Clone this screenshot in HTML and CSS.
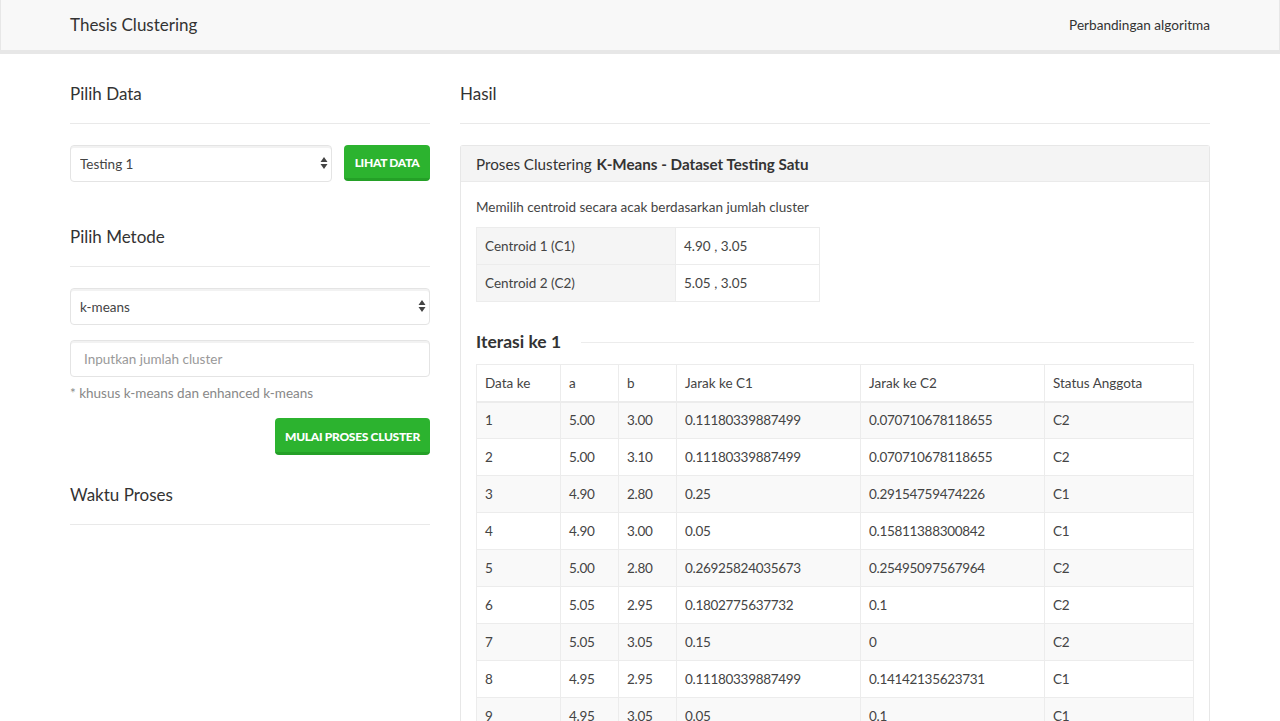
FILE: index.html
```html
<!DOCTYPE html>
<html lang="id">
<head>
<meta charset="utf-8">
<title>Thesis Clustering</title>
<link rel="stylesheet" href="styles.css">
</head>
<body>
<nav class="navbar">
  <div class="container nav-inner">
    <a class="brand" href="#">Thesis Clustering</a>
    <a class="nav-link" href="#">Perbandingan algoritma</a>
  </div>
</nav>
<main class="container layout">
  <section class="side">
    <h4 class="section-title">Pilih Data</h4>
    <hr class="rule">
    <div class="data-row">
      <div class="select-wrap grow">
        <select class="field"><option>Testing 1</option></select>
        <svg class="arrows" width="8" height="14" viewBox="0 0 8 14"><path d="M4 1 L7.5 6 H0.5 Z M4 13 L7.5 8 H0.5 Z" fill="#444"/></svg>
      </div>
      <button class="btn btn-small">Lihat Data</button>
    </div>
    <h4 class="section-title second">Pilih Metode</h4>
    <hr class="rule">
    <div class="select-wrap">
      <select class="field"><option>k-means</option></select>
      <svg class="arrows" width="8" height="14" viewBox="0 0 8 14"><path d="M4 1 L7.5 6 H0.5 Z M4 13 L7.5 8 H0.5 Z" fill="#444"/></svg>
    </div>
    <input class="field input" type="text" placeholder="Inputkan jumlah cluster">
    <p class="help">* khusus k-means dan enhanced k-means</p>
    <div class="actions"><button class="btn btn-wide">Mulai Proses Cluster</button></div>
    <h4 class="section-title third">Waktu Proses</h4>
    <hr class="rule">
  </section>
  <section class="content">
    <h4 class="section-title">Hasil</h4>
    <hr class="rule">
    <div class="panel">
      <div class="panel-heading">Proses Clustering <b>K-Means - Dataset Testing Satu</b></div>
      <div class="panel-body">
        <p class="lead-text">Memilih centroid secara acak berdasarkan jumlah cluster</p>
        <table class="centroids">
          <tr><th>Centroid 1 (C1)</th><td>4.90 , 3.05</td></tr>
          <tr><th>Centroid 2 (C2)</th><td>5.05 , 3.05</td></tr>
        </table>
        <h4 class="iter">Iterasi ke 1</h4>
        <table class="data">
          <colgroup><col class="c1"><col class="c2"><col class="c3"><col class="c4"><col class="c5"><col class="c6"></colgroup>
          <thead><tr><th>Data ke</th><th>a</th><th>b</th><th>Jarak ke C1</th><th>Jarak ke C2</th><th>Status Anggota</th></tr></thead>
          <tbody>
            <tr><td>1</td><td>5.00</td><td>3.00</td><td>0.11180339887499</td><td>0.070710678118655</td><td>C2</td></tr>
            <tr><td>2</td><td>5.00</td><td>3.10</td><td>0.11180339887499</td><td>0.070710678118655</td><td>C2</td></tr>
            <tr><td>3</td><td>4.90</td><td>2.80</td><td>0.25</td><td>0.29154759474226</td><td>C1</td></tr>
            <tr><td>4</td><td>4.90</td><td>3.00</td><td>0.05</td><td>0.15811388300842</td><td>C1</td></tr>
            <tr><td>5</td><td>5.00</td><td>2.80</td><td>0.26925824035673</td><td>0.25495097567964</td><td>C2</td></tr>
            <tr><td>6</td><td>5.05</td><td>2.95</td><td>0.1802775637732</td><td>0.1</td><td>C2</td></tr>
            <tr><td>7</td><td>5.05</td><td>3.05</td><td>0.15</td><td>0</td><td>C2</td></tr>
            <tr><td>8</td><td>4.95</td><td>2.95</td><td>0.11180339887499</td><td>0.14142135623731</td><td>C1</td></tr>
            <tr><td>9</td><td>4.95</td><td>3.05</td><td>0.05</td><td>0.1</td><td>C1</td></tr>
          </tbody>
        </table>
      </div>
    </div>
  </section>
</main>
</body>
</html>
```
FILE: styles.css
```css
* { box-sizing: border-box; }
html { overflow: hidden; }
body {
  margin: 0;
  font-family: Lato, "Open Sans", sans-serif;
  font-size: 13.5px;
  color: #444;
  background: #fff;
}
.container { width: 1170px; margin: 0 auto; padding: 0 15px; }

.navbar {
  height: 54px;
  background: #f8f8f8;
  border: 1px solid #e7e7e7;
  border-top: 0;
  border-bottom-width: 4px;
}
.nav-inner {
  height: 50px;
  display: flex;
  align-items: center;
  justify-content: space-between;
}
.brand { font-size: 17px; color: #333; text-decoration: none; margin-top: -1px; }
.nav-link { font-size: 13.6px; color: #333; text-decoration: none; }

.layout { display: flex; gap: 30px; }
.side { width: 360px; }
.content { width: 750px; }

.section-title {
  margin: 0;
  padding-top: 30px;
  font-size: 17px;
  font-weight: 400;
  line-height: 20px;
  color: #333;
}
.section-title.second { padding-top: 45px; }
.section-title.third { padding-top: 30px; }
.rule { border: 0; border-top: 1px solid #e9e9e9; margin: 19px 0 21px; }

.data-row { display: flex; gap: 12px; align-items: flex-start; }
.grow { flex: 1; }
.select-wrap { position: relative; }
.field {
  display: block;
  width: 100%;
  height: 37px;
  padding: 0 9px;
  font-family: inherit;
  font-size: 13.5px;
  color: #444;
  background: #fff;
  border: 1px solid #e4e4e4;
  border-radius: 4px;
  box-shadow: inset 0 2px 0 rgba(0,0,0,0.05);
  appearance: none;
  -webkit-appearance: none;
  outline: none;
}
.arrows { position: absolute; right: 4px; top: 11px; }
.input { margin-top: 15px; padding-left: 13px; }
.input::placeholder { color: #999; }
.help { margin: 6px 0 0; color: #888; line-height: 20px; }
.actions { display: flex; justify-content: flex-end; margin-top: 15px; }
.btn {
  height: 36px;
  padding: 2px 0 0;
  background: #2cb32f;
  color: #fff;
  border: 0;
  border-bottom: 3px solid #24a027;
  border-radius: 4px;
  font-family: inherit;
  font-size: 12px;
  font-weight: 900;
  text-transform: uppercase;
  letter-spacing: -0.3px;
}
.btn-small { width: 86px; }
.btn-wide { width: 155px; height: 37px; }

.panel {
  border: 1px solid #e7e7e7;
  border-radius: 3px 3px 0 0;
  border-bottom: 0;
  height: 600px;
}
.panel-heading {
  height: 36px;
  background: #f4f4f4;
  border-bottom: 1px solid #eaeaea;
  padding: 0 15px;
  display: flex;
  align-items: center;
  font-size: 15.2px;
  color: #333;
}
.panel-heading b { margin-left: 5px; font-weight: 700; }
.panel-body { padding: 15px 15px 15px; }
.lead-text { margin: 0 0 10px; line-height: 20px; }

table { border-collapse: collapse; }
.centroids { width: 344px; }
.centroids th, .centroids td {
  height: 37px;
  padding: 0 8px;
  border: 1px solid #ececec;
  text-align: left;
  font-weight: 400;
}
.centroids th { width: 199px; background: #f5f5f5; }

.iter {
  display: flex;
  align-items: center;
  margin: 30px 0 12px;
  font-size: 17.5px;
  font-weight: 700;
  color: #333;
  line-height: 20px;
}
.iter::after {
  content: "";
  flex: 1;
  border-top: 1px solid #ececec;
  margin-left: 20px;
}

.data { width: 717px; table-layout: fixed; }
.data .c1 { width: 84px; }
.data .c2 { width: 58px; }
.data .c3 { width: 58px; }
.data .c4 { width: 184px; }
.data .c5 { width: 184px; }
.data .c6 { width: 149px; }
.data th, .data td {
  height: 37px;
  padding: 0 8px;
  border: 1px solid #ececec;
  text-align: left;
  font-weight: 400;
}
.data td { letter-spacing: -0.3px; }
.data thead th { border-bottom: 2px solid #ececec; }
.data tbody tr:nth-child(odd) td { background: #f9f9f9; }
```
